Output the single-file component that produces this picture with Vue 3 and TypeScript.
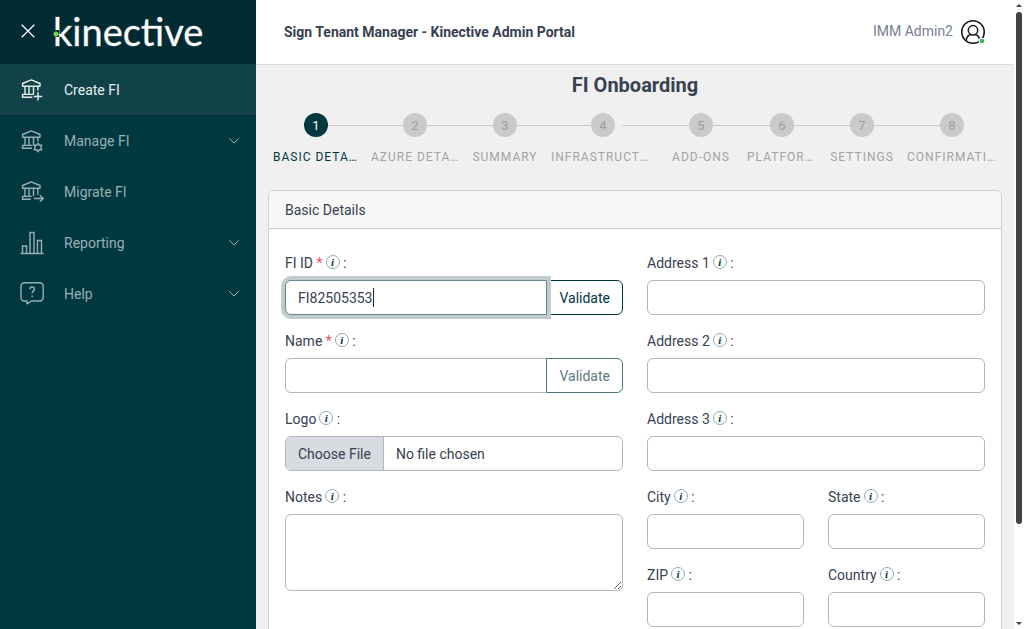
<script setup lang="ts">
import { ref } from 'vue'

interface NavItem {
  label: string
  icon: 'create' | 'manage' | 'migrate' | 'report' | 'help'
  active?: boolean
  expandable?: boolean
}

interface Field {
  id: string
  label: string
  half?: boolean
}

const navItems: NavItem[] = [
  { label: 'Create FI', icon: 'create', active: true },
  { label: 'Manage FI', icon: 'manage', expandable: true },
  { label: 'Migrate FI', icon: 'migrate' },
  { label: 'Reporting', icon: 'report', expandable: true },
  { label: 'Help', icon: 'help', expandable: true },
]

const steps: string[] = [
  'Basic Details',
  'Azure Details',
  'Summary',
  'Infrastructure',
  'Add-ons',
  'Platforms',
  'Settings',
  'Confirmation',
]

const addressFields: Field[] = [
  { id: 'address1', label: 'Address 1' },
  { id: 'address2', label: 'Address 2' },
  { id: 'address3', label: 'Address 3' },
  { id: 'city', label: 'City', half: true },
  { id: 'state', label: 'State', half: true },
  { id: 'zip', label: 'ZIP', half: true },
  { id: 'country', label: 'Country', half: true },
]

const current = ref(0)
const fiId = ref('FI82505353')
const name = ref('')
const notes = ref('')
</script>

<template>
  <div class="app">
    <aside class="sidebar">
      <div class="brand">
        <button class="close" type="button" aria-label="Close menu">
          <svg width="14" height="14" viewBox="0 0 14 14" fill="none" stroke="currentColor" stroke-width="1.3">
            <path d="M.7.7l12.6 12.6M13.3.7L.7 13.3" />
          </svg>
        </button>
        <span class="logo">kinective</span>
      </div>
      <nav class="nav">
        <a v-for="item in navItems" :key="item.label" href="#" class="nav-item" :class="{ active: item.active }">
          <svg class="nav-icon" width="24" height="24" viewBox="0 0 24 24" fill="none" stroke="currentColor" stroke-width="1.4">
            <g v-if="item.icon === 'create' || item.icon === 'manage' || item.icon === 'migrate'">
              <path d="M2.6 8.3V5.5L11.3 1.9 20 5.5v2.8z" stroke-linejoin="round" />
              <path d="M5 8.3v8M9 8.3v8M13.500 8.3v8M17.9 8.3v4.200" />
              <path v-if="item.icon === 'create'" d="M13.8 16.4H2.6v2.8h9.8M18 14.2v8.4M13.8 18.5h8.4" />
              <path v-if="item.icon === 'migrate'" d="M17.9 12.5v2.3M11.8 16.4H2.6v2.8h8.2M14 18.5h9M19.8 15.3l3.4 3.2-3.4 3.2" />
              <template v-if="item.icon === 'manage'">
                <path d="M12.4 16.4H2.6v2.8h9.4" />
                <path d="M18 14.2l1.3 2.1 2.5-.1-1 2.3 1 2.3-2.5-.1L18 22.8l-1.3-2.1-2.5.1 1-2.3-1-2.3 2.5.1z" stroke-linejoin="round" />
              </template>
            </g>
            <path v-else-if="item.icon === 'report'" d="M.6 22.5h23M2.5 22.5V15h4v7.5M10 22.5v-21h4v21M17.5 22.5v-13h4v13" />
            <g v-else>
              <path d="M4.5.8h15.2a3.5 3.5 0 0 1 3.5 3.5v11.2a3.5 3.5 0 0 1-3.5 3.5h-8.2L7 21.8V19H4.5A3.5 3.5 0 0 1 1 15.5V4.3A3.5 3.5 0 0 1 4.5.8z" stroke-linejoin="round" />
              <path d="M9.9 7.3c0-3.2 4.5-3 4.5-.2 0 2.2-2.2 1.9-2.2 4.1M12.2 13.4v1.5" />
            </g>
          </svg>
          <span class="nav-label">{{ item.label }}</span>
          <svg v-if="item.expandable" class="chevron" width="12" height="8" viewBox="0 0 12 8" fill="none" stroke="currentColor">
            <path d="M1.2 1.2L6 6l4.8-4.8" />
          </svg>
        </a>
      </nav>
    </aside>

    <main class="main">
      <header class="topbar">
        <h1 class="app-title">Sign Tenant Manager - Kinective Admin Portal</h1>
        <button class="user" type="button">
          <span>IMM Admin2</span>
          <svg width="26" height="26" viewBox="0 0 26 26" fill="none" stroke="#15191d" stroke-width="1.5">
            <circle cx="13" cy="13" r="11.3" />
            <circle cx="13" cy="11.3" r="4.7" />
            <path d="M6.100 21.900c.4-3.6 2.4-5.9 5.1-6.300M19.900 21.900c-.4-3.6-2.4-5.9-5.1-6.300" />
            <circle cx="22" cy="22" r="3.3" fill="#fff" stroke="none" />
            <circle cx="22" cy="22" r="2.2" fill="#2eb85c" stroke="none" />
          </svg>
        </button>
      </header>

      <section class="content">
        <h2 class="page-title">FI Onboarding</h2>

        <ol class="steps">
          <li v-for="(step, i) in steps" :key="step" class="step" :class="{ current: i === current, detached: i === 3 }">
            <span class="bubble">{{ i + 1 }}</span>
            <span class="step-label">{{ step }}</span>
          </li>
        </ol>

        <form class="card" @submit.prevent>
          <h3 class="card-head">Basic Details</h3>
          <div class="card-body">
            <div class="column">
              <div class="field">
                <label class="label" for="fi-id">FI ID <span class="req">*</span><i class="info">i</i> :</label>
                <div class="group">
                  <input id="fi-id" v-model="fiId" class="control focused" type="text" />
                  <span class="caret" aria-hidden="true"></span>
                  <button class="validate" type="button">Validate</button>
                </div>
              </div>
              <div class="field">
                <label class="label" for="name">Name <span class="req">*</span><i class="info">i</i> :</label>
                <div class="group">
                  <input id="name" v-model="name" class="control" type="text" />
                  <button class="validate" type="button" disabled>Validate</button>
                </div>
              </div>
              <div class="field">
                <label class="label" for="logo">Logo<i class="info">i</i> :</label>
                <input id="logo" class="control file" type="file" />
              </div>
              <div class="field">
                <label class="label" for="notes">Notes<i class="info">i</i> :</label>
                <textarea id="notes" v-model="notes" class="control notes"></textarea>
              </div>
            </div>
            <div class="column address">
              <div v-for="f in addressFields" :key="f.id" class="field" :class="{ half: f.half }">
                <label class="label" :for="f.id">{{ f.label }}<i class="info">i</i> :</label>
                <input :id="f.id" class="control" type="text" />
              </div>
            </div>
          </div>
        </form>
      </section>
    </main>

    <div class="scrollbar" aria-hidden="true">
      <span class="arrow up"></span>
      <span class="track"><span class="thumb"></span></span>
      <span class="arrow down"></span>
    </div>
  </div>
</template>

<style>
body {
  overflow: hidden;
}
</style>

<style scoped>
.app,
.app * {
  box-sizing: border-box;
}
.app {
  display: grid;
  grid-template-columns: 256px minmax(0, 1fr) 10px;
  height: 100vh;
  overflow: hidden;
  background: #f0f0f0;
  color: #374151;
  font: 14px/21px Roboto, "Liberation Sans", sans-serif;
}
button,
input,
textarea {
  font: inherit;
  color: inherit;
}

.sidebar {
  background: #003840;
}
.brand {
  display: flex;
  align-items: center;
  height: 64px;
  padding: 0 0 2px 21px;
  background: #002b33;
  color: #fff;
}
.close {
  display: flex;
  width: 32px;
  height: 14px;
  padding: 0;
  border: 0;
  background: none;
  color: #fff;
}
.logo {
  position: relative;
  font: 38px/46px Lato, sans-serif;
  -webkit-text-stroke: 1px rgba(255, 255, 255, 0.3);
}
/* Green dot set into the stem of the k */
.logo::before {
  content: "";
  position: absolute;
  left: 0;
  top: 22px;
  width: 6px;
  height: 7px;
  background: radial-gradient(circle at 3px 4px, #6cdb4c 2px, #002b33 3px);
}
.nav-item {
  display: flex;
  align-items: center;
  height: 51px;
  padding: 0 16px 0 20px;
  color: #99afb3;
  text-decoration: none;
}
.nav-item.active {
  background: #104247;
  color: #e8eeee;
}
.nav-label {
  flex: 1;
  margin-left: 20px;
  padding-top: 2px;
}

.main {
  min-width: 0;
  overflow: hidden;
}
.topbar {
  display: flex;
  align-items: center;
  justify-content: space-between;
  height: 65px;
  padding: 0 28px;
  border-bottom: 1px solid #d8dbe0;
  background: #fff;
}
.app-title {
  margin: 0;
  font-size: 14px;
  font-weight: 700;
}
.user {
  display: flex;
  align-items: center;
  gap: 7px;
  padding: 0;
  border: 0;
  background: none;
  color: #768192;
}
.user span {
  padding-bottom: 2px;
}
.content {
  padding: 5px 12px 24px;
}
.page-title {
  margin: 0;
  font-size: 20px;
  line-height: 30px;
  font-weight: 700;
  text-align: center;
}

.steps {
  position: relative;
  display: grid;
  grid-template-columns: 86fr 88fr 68fr 104fr 68fr 70fr 66fr 90fr;
  gap: 12px;
  margin: 13px 0 23px;
  padding: 0 5px;
  list-style: none;
}
.steps::before {
  content: "";
  position: absolute;
  top: 12px;
  left: 48px;
  right: 50px;
  height: 1px;
  background: #c8c8c8;
}
.step {
  display: flex;
  flex-direction: column;
  align-items: center;
  gap: 10px;
  min-width: 0;
  color: #a3a3a3;
}
.bubble {
  position: relative;
  width: 24px;
  height: 24px;
  border-radius: 50%;
  background: #cacaca;
  font-size: 13px;
  line-height: 25px;
  text-align: center;
  color: #9d9d9d;
}
.detached .bubble::after {
  content: "";
  position: absolute;
  left: 24px;
  top: 10px;
  width: 7px;
  height: 4px;
  background: #f0f0f0;
}
.step-label {
  max-width: 100%;
  overflow: hidden;
  text-overflow: ellipsis;
  white-space: nowrap;
  font-size: 12px;
  line-height: 20px;
  letter-spacing: 1px;
  text-transform: uppercase;
}
.current {
  color: #003840;
}
.current .bubble {
  background: #003840;
  color: #fff;
}

.card {
  border: 1px solid #ccced0;
  border-radius: 6px;
  background: #fff;
  overflow: hidden;
}
.card-head {
  margin: 0;
  padding: 9px 16px 7px;
  border-bottom: 1px solid #ccced0;
  background: #f7f7f7;
  font-size: 14px;
  font-weight: 400;
}
.card-body {
  display: grid;
  grid-template-columns: 1fr 1fr;
  gap: 24px;
  padding: 24px 16px;
}
.column {
  display: flex;
  flex-direction: column;
  gap: 16px;
  min-width: 0;
}
.address {
  display: grid;
  grid-template-columns: 1fr 1fr;
  align-content: start;
  gap: 16px 24px;
}
.address .field:not(.half) {
  grid-column: 1 / -1;
}
.label {
  display: block;
  height: 21px;
  margin-bottom: 6px;
}
.req {
  color: #e55353;
}
.info {
  display: inline-block;
  width: 14px;
  height: 14px;
  margin: 0 0 0 3px;
  border: 1px solid #8fabb0;
  border-radius: 50%;
  font: italic bold 11px/12px "Liberation Serif", serif;
  text-align: center;
  vertical-align: 2px;
  color: #003840;
}
.control {
  display: block;
  width: 100%;
  height: 35px;
  margin: 0;
  padding: 6px 12px;
  border: 1px solid #b1b7c1;
  border-radius: 6px;
  background: #fff;
  outline: none;
}
.group {
  position: relative;
  display: flex;
}
.group .control {
  flex: 1;
  min-width: 0;
  border-radius: 6px 0 0 6px;
}
.group .focused {
  position: relative;
  z-index: 1;
  border-color: #66888c;
  box-shadow: 0 0 0 4px #bfcdcf;
}
.caret {
  position: absolute;
  z-index: 2;
  left: 88px;
  top: 8px;
  width: 1px;
  height: 19px;
  background: #202832;
}
.validate {
  position: relative;
  margin-left: -1px;
  padding: 2px 12px 0;
  border: 1px solid #003840;
  border-radius: 0 6px 6px 0;
  background: #fff;
  color: #003840;
}
.validate:disabled {
  border-color: #4d7479;
  color: #597c81;
}
.file {
  padding: 0;
  line-height: 33px;
  overflow: hidden;
}
.file::file-selector-button {
  height: 33px;
  margin: 0 12px 0 0;
  padding: 1px 12px 0;
  border: 0;
  border-right: 1px solid #b1b7c1;
  background: #d8dbe0;
  color: inherit;
  font: inherit;
}
.notes {
  height: 77px;
  resize: vertical;
}

.scrollbar {
  display: flex;
  flex-direction: column;
  align-items: center;
  padding: 4px 0;
  background: #fff;
}
.arrow {
  border: 3px solid transparent;
}
.up {
  border-top: 0;
  border-bottom-color: #424242;
}
.down {
  border-bottom: 0;
  border-top-color: #424242;
}
.track {
  flex: 1;
  width: 6px;
  padding: 5px 0;
}
.thumb {
  display: block;
  height: calc(100% - 93px);
  border-radius: 3px;
  background: #424242;
}
</style>
